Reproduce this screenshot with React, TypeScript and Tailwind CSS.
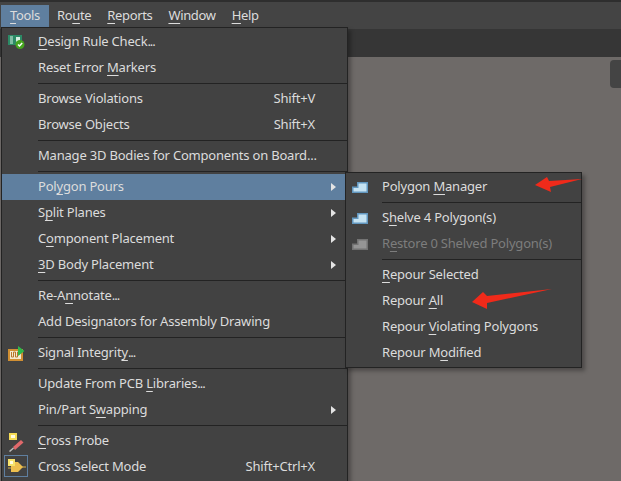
import React from 'react';

type Item = { label: React.ReactNode; shortcut?: string; arrow?: boolean; active?: boolean; disabled?: boolean; checked?: boolean; icon?: React.ReactNode };

const U = ({ children }: { children: string }) => <span className="underline underline-offset-[3px]">{children}</span>;
const Dots = () => <span className="tracking-[-1px]">...</span>;

const PolygonIcon = ({ muted }: { muted?: boolean }) => (
  <svg width="16" height="11" viewBox="0 0 16 11">
    <path d="M0.75 5.25H5.75V0.75H15.25V10.25H0.75Z" fill={muted ? '#959595' : '#c6e3f2'} stroke={muted ? '#737373' : '#6297bf'} strokeWidth="1.5" />
  </svg>
);

const DrcIcon = () => (
  <svg width="17" height="14" viewBox="0 0 17 14">
    <rect x="0" y="0" width="14" height="10" fill="#2c8a66" />
    <path d="M2 2H5M2 4H5M2 6H5M2 8H5" stroke="#d6efe2" />
    <rect x="8" y="2" width="4" height="5" fill="#d6efe2" />
    <circle cx="12" cy="9.5" r="4.5" fill="#46a51f" />
    <path d="M10 9.5L11.5 11L14.2 8" stroke="#ffffff" strokeWidth="1.5" fill="none" />
  </svg>
);

const SignalIcon = () => (
  <svg width="17" height="15" viewBox="0 0 17 15">
    <rect x="1" y="4" width="13" height="10" fill="#f2ead2" stroke="#d08f33" strokeWidth="2" />
    <path d="M3.5 6V11H5.5V6H7.5V11H9.5V6H11V9" stroke="#b8762b" fill="none" />
    <path d="M10 0L16.5 5L10 10Z" fill="#2fb84a" />
  </svg>
);

const ProbeIcon = () => (
  <svg width="16" height="22" viewBox="0 0 16 22">
    <path d="M5 17L13 10L15.5 12.5L7 20Z" fill="#e0696b" />
    <path d="M1.5 21.5L5.5 18" stroke="#bdbdbd" strokeWidth="1.5" />
    <rect x="1" y="3" width="8" height="7" fill="#f5dc55" />
    <rect x="3" y="5" width="4" height="3" fill="#fffbe0" />
  </svg>
);

const SelectIcon = () => (
  <svg width="20" height="14" viewBox="0 0 20 14">
    <path d="M2 9H6M16 8H20" stroke="#d9b14a" />
    <path d="M5 3H12L17 8L12 13H5Z" fill="#eebf4e" />
    <rect x="2" y="0" width="7" height="7" fill="#f7e36b" />
    <rect x="4" y="2" width="3" height="3" fill="#fffbe0" />
  </svg>
);

const toolsItems: (Item | 'sep')[] = [
  { label: <><U>D</U>esign Rule Check<Dots /></>, icon: <DrcIcon /> },
  { label: <>Reset Error <U>M</U>arkers</> },
  'sep',
  { label: 'Browse Violations', shortcut: 'Shift+V' },
  { label: 'Browse Objects', shortcut: 'Shift+X' },
  'sep',
  { label: 'Manage 3D Bodies for Components on Board...' },
  'sep',
  { label: <>Pol<U>y</U>gon Pours</>, arrow: true, active: true },
  { label: <>S<U>p</U>lit Planes</>, arrow: true },
  { label: <>C<U>o</U>mponent Placement</>, arrow: true },
  { label: <><U>3</U>D Body Placement</>, arrow: true },
  'sep',
  { label: <>Re-A<U>n</U>notate<Dots /></> },
  { label: <>Add Designators for Assembly Drawing</> },
  'sep',
  { label: <>Signal Integrit<U>y</U><Dots /></>, icon: <SignalIcon /> },
  'sep',
  { label: <>Update From PCB <U>L</U>ibraries<Dots /></> },
  { label: <>Pin/Part S<U>w</U>apping</>, arrow: true },
  'sep',
  { label: <><U>C</U>ross Probe</>, icon: <ProbeIcon /> },
  { label: 'Cross Select Mode', shortcut: 'Shift+Ctrl+X', icon: <SelectIcon />, checked: true },
];

const polygonItems: (Item | 'sep')[] = [
  { label: <>Polygon <U>M</U>anager</>, icon: <PolygonIcon /> },
  'sep',
  { label: <>S<U>h</U>elve 4 Polygon(s)</>, icon: <PolygonIcon /> },
  { label: <>R<U>e</U>store 0 Shelved Polygon(s)</>, icon: <PolygonIcon muted />, disabled: true },
  'sep',
  { label: <><U>R</U>epour Selected</> },
  { label: <>Repour <U>A</U>ll</> },
  { label: <>Repour <U>V</U>iolating Polygons</> },
  { label: <>Repour M<U>o</U>dified</> },
];

const Menu = ({ items }: { items: (Item | 'sep')[] }) => (
  <div className="flex flex-col">
    {items.map((item, i) =>
      item === 'sep' ? (
        <div key={i} className="h-[5px] flex items-center pl-9">
          <div className="h-px w-full bg-[#232323]" />
        </div>
      ) : (
        <div
          key={i}
          className={`h-[26px] flex items-center ${item.active ? 'bg-[#5f7f9f]' : ''} ${item.disabled ? 'text-[#7d7d7d]' : 'text-[#dcdcdc]'}`}
        >
          <div className="w-9 shrink-0 h-full flex items-center">
            <div className={`w-7 flex items-center justify-center ${item.checked ? 'h-[22px] px-0.5 bg-clip-content' : 'h-full'}`}>
              <div className={`w-6 h-full flex items-center justify-center ${item.checked ? 'border border-[#5f7f9f] mb-0.5' : ''}`}>{item.icon}</div>
            </div>
          </div>
          <div className="flex-1 whitespace-nowrap">{item.label}</div>
          {item.shortcut && <div className="pr-8 whitespace-nowrap">{item.shortcut}</div>}
          {item.arrow && (
            <svg width="5" height="8" viewBox="0 0 5 8" className="mr-[11px]">
              <path d="M0 0L5 4L0 8Z" fill="#e4e4e4" />
            </svg>
          )}
        </div>
      ),
    )}
  </div>
);

export default function App() {
  return (
    <div className="relative w-[621px] h-[481px] overflow-hidden bg-[#6e6a68] text-[13px] tracking-[-0.2px] font-['Noto_Sans',sans-serif]">
      <div className="h-[2px] bg-[#2e2e2e]" />
      <div className="h-[27px] bg-[#444444] flex items-center pl-px tracking-[-0.35px] text-[#dcdcdc]">
        <div className="h-[23px] w-[48px] mt-px flex items-center justify-center bg-[#5f7f9f]"><span><U>T</U>ools</span></div>
        <div className="px-2"><span>Ro<U>u</U>te</span></div>
        <div className="px-2"><span><U>R</U>eports</span></div>
        <div className="px-2"><span><U>W</U>indow</span></div>
        <div className="px-2"><span><U>H</U>elp</span></div>
      </div>
      <div className="h-[28px] bg-[#363636]" />
      <div className="absolute right-0 top-[60px] w-[11px] h-[28px] bg-[#444444] rounded-l" />

      <div className="absolute left-px top-[27px] w-[347px] h-[470px] bg-[#424242] border border-[#232323] py-px shadow-[3px_3px_4px_rgba(0,0,0,0.3)]">
        <Menu items={toolsItems} />
      </div>
      <div className="absolute left-[345px] top-[172px] w-[237px] bg-[#424242] border border-[#232323] py-px shadow-[3px_3px_4px_rgba(0,0,0,0.3)]">
        <Menu items={polygonItems} />
      </div>

      <svg className="absolute left-0 top-0 pointer-events-none" width="621" height="481" viewBox="0 0 621 481">
        <path d="M535 185L547 177L549 181L582 179L550 187L551 192Z" fill="#f02a1a" />
        <path d="M472 302L483 292L487 296L552 289L487 303L487 309Z" fill="#f02a1a" />
      </svg>
    </div>
  );
}
